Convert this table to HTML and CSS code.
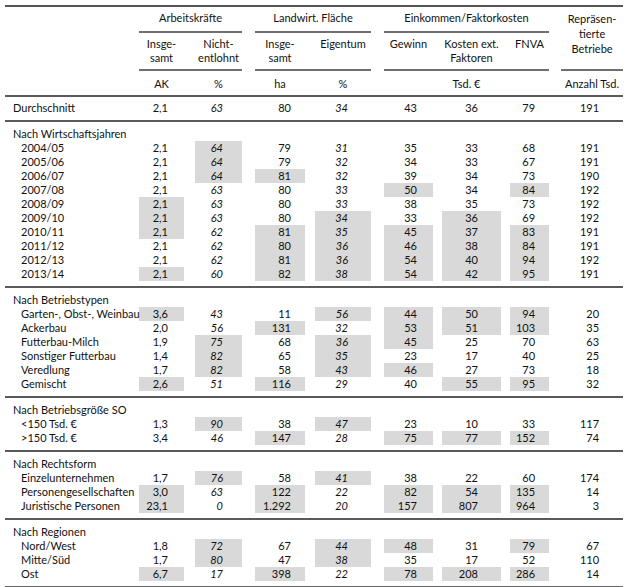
FILE: index.html
```html
<!DOCTYPE html>
<html lang="de">
<head>
<meta charset="utf-8">
<title>Betriebe</title>
<link rel="stylesheet" href="styles.css">
</head>
<body>
<table class="t">
  <colgroup>
    <col class="w-lbl"><col class="w-ak"><col class="w-g11"><col class="w-ne"><col class="w-g13"><col class="w-lf"><col class="w-g10"><col class="w-eig"><col class="w-g13"><col class="w-gew"><col class="w-g9"><col class="w-kos"><col class="w-g9"><col class="w-fnva"><col class="w-g12"><col class="w-anz">
  </colgroup>
  <thead>
    <tr class="h1">
      <th></th>
      <th colspan="3" class="ln">Arbeitskräfte</th>
      <th></th>
      <th colspan="3" class="ln">Landwirt. Fläche</th>
      <th></th>
      <th colspan="5" class="ln">Einkommen/Faktorkosten</th>
      <th></th>
      <th rowspan="2" class="ln rep">Repräsen-<br>tierte<br>Betriebe</th>
    </tr>
    <tr class="h2">
      <th></th>
      <th class="ln">Insge-<br>samt</th><th class="ln"></th><th class="ln">Nicht-<br>entlohnt</th>
      <th></th>
      <th class="ln">Insge-<br>samt</th><th class="ln"></th><th class="ln">Eigentum</th>
      <th></th>
      <th class="ln">Gewinn</th><th class="ln"></th><th class="ln">Kosten ext.<br>Faktoren</th><th class="ln"></th><th class="ln">FNVA</th>
      <th></th>
    </tr>
    <tr class="h3">
      <th></th>
      <th>AK</th><th></th><th>%</th><th></th><th>ha</th><th></th><th>%</th><th></th>
      <th colspan="5">Tsd. €</th><th></th><th>Anzahl Tsd.</th>
    </tr>
  </thead>
  <tbody class="avg">
    <tr class="r"><td class="top">Durchschnitt</td><td>2,1</td><td></td><td>63</td><td></td><td>80</td><td></td><td>34</td><td></td><td>43</td><td></td><td>36</td><td></td><td>79</td><td></td><td>191</td></tr>
  </tbody>
  <tbody class="sec">
    <tr class="hd"><th colspan="16">Nach Wirtschaftsjahren</th></tr>
    <tr class="r"><td>2004/05</td><td>2,1</td><td></td><td class="s">64</td><td></td><td>79</td><td></td><td>31</td><td></td><td>35</td><td></td><td>33</td><td></td><td>68</td><td></td><td>191</td></tr>
    <tr class="r"><td>2005/06</td><td>2,1</td><td></td><td class="s">64</td><td></td><td>79</td><td></td><td>32</td><td></td><td>34</td><td></td><td>33</td><td></td><td>67</td><td></td><td>191</td></tr>
    <tr class="r"><td>2006/07</td><td>2,1</td><td></td><td class="s">64</td><td></td><td class="s">81</td><td></td><td>32</td><td></td><td>39</td><td></td><td>34</td><td></td><td>73</td><td></td><td>190</td></tr>
    <tr class="r"><td>2007/08</td><td>2,1</td><td></td><td>63</td><td></td><td>80</td><td></td><td>33</td><td></td><td class="s">50</td><td></td><td>34</td><td></td><td class="s">84</td><td></td><td>192</td></tr>
    <tr class="r"><td>2008/09</td><td class="s">2,1</td><td></td><td>63</td><td></td><td>80</td><td></td><td>33</td><td></td><td>38</td><td></td><td>35</td><td></td><td>73</td><td></td><td>192</td></tr>
    <tr class="r"><td>2009/10</td><td class="s">2,1</td><td></td><td>63</td><td></td><td>80</td><td></td><td class="s">34</td><td></td><td>33</td><td></td><td class="s">36</td><td></td><td>69</td><td></td><td>192</td></tr>
    <tr class="r"><td>2010/11</td><td class="s">2,1</td><td></td><td>62</td><td></td><td class="s">81</td><td></td><td class="s">35</td><td></td><td class="s">45</td><td></td><td class="s">37</td><td></td><td class="s">83</td><td></td><td>191</td></tr>
    <tr class="r"><td>2011/12</td><td>2,1</td><td></td><td>62</td><td></td><td class="s">80</td><td></td><td class="s">36</td><td></td><td class="s">46</td><td></td><td class="s">38</td><td></td><td class="s">84</td><td></td><td>191</td></tr>
    <tr class="r"><td>2012/13</td><td>2,1</td><td></td><td>62</td><td></td><td class="s">81</td><td></td><td class="s">36</td><td></td><td class="s">54</td><td></td><td class="s">40</td><td></td><td class="s">94</td><td></td><td>192</td></tr>
    <tr class="r"><td>2013/14</td><td class="s">2,1</td><td></td><td>60</td><td></td><td class="s">82</td><td></td><td class="s">38</td><td></td><td class="s">54</td><td></td><td class="s">42</td><td></td><td class="s">95</td><td></td><td>191</td></tr>
    <tr class="pad"><td colspan="16"></td></tr>
  </tbody>
  <tbody class="sec">
    <tr class="hd"><th colspan="16">Nach Betriebstypen</th></tr>
    <tr class="r"><td>Garten-, Obst-, Weinbau</td><td class="s">3,6</td><td></td><td>43</td><td></td><td>11</td><td></td><td class="s">56</td><td></td><td class="s">44</td><td></td><td class="s">50</td><td></td><td class="s">94</td><td></td><td>20</td></tr>
    <tr class="r"><td>Ackerbau</td><td>2,0</td><td></td><td>56</td><td></td><td class="s">131</td><td></td><td>32</td><td></td><td class="s">53</td><td></td><td class="s">51</td><td></td><td class="s">103</td><td></td><td>35</td></tr>
    <tr class="r"><td>Futterbau-Milch</td><td>1,9</td><td></td><td class="s">75</td><td></td><td>68</td><td></td><td class="s">36</td><td></td><td class="s">45</td><td></td><td>25</td><td></td><td>70</td><td></td><td>63</td></tr>
    <tr class="r"><td>Sonstiger Futterbau</td><td>1,4</td><td></td><td class="s">82</td><td></td><td>65</td><td></td><td class="s">35</td><td></td><td>23</td><td></td><td>17</td><td></td><td>40</td><td></td><td>25</td></tr>
    <tr class="r"><td>Veredlung</td><td>1,7</td><td></td><td class="s">82</td><td></td><td>58</td><td></td><td class="s">43</td><td></td><td class="s">46</td><td></td><td>27</td><td></td><td>73</td><td></td><td>18</td></tr>
    <tr class="r"><td>Gemischt</td><td class="s">2,6</td><td></td><td>51</td><td></td><td class="s">116</td><td></td><td>29</td><td></td><td>40</td><td></td><td class="s">55</td><td></td><td class="s">95</td><td></td><td>32</td></tr>
    <tr class="pad"><td colspan="16"></td></tr>
  </tbody>
  <tbody class="sec">
    <tr class="hd"><th colspan="16">Nach Betriebsgröße SO</th></tr>
    <tr class="r"><td>&lt;150 Tsd. €</td><td>1,3</td><td></td><td class="s">90</td><td></td><td>38</td><td></td><td class="s">47</td><td></td><td>23</td><td></td><td>10</td><td></td><td>33</td><td></td><td>117</td></tr>
    <tr class="r"><td>&gt;150 Tsd. €</td><td>3,4</td><td></td><td>46</td><td></td><td class="s">147</td><td></td><td>28</td><td></td><td class="s">75</td><td></td><td class="s">77</td><td></td><td class="s">152</td><td></td><td>74</td></tr>
    <tr class="pad"><td colspan="16"></td></tr>
  </tbody>
  <tbody class="sec">
    <tr class="hd"><th colspan="16">Nach Rechtsform</th></tr>
    <tr class="r"><td>Einzelunternehmen</td><td>1,7</td><td></td><td class="s">76</td><td></td><td>58</td><td></td><td class="s">41</td><td></td><td>38</td><td></td><td>22</td><td></td><td>60</td><td></td><td>174</td></tr>
    <tr class="r"><td>Personengesellschaften</td><td class="s">3,0</td><td></td><td>63</td><td></td><td class="s">122</td><td></td><td>22</td><td></td><td class="s">82</td><td></td><td class="s">54</td><td></td><td class="s">135</td><td></td><td>14</td></tr>
    <tr class="r"><td>Juristische Personen</td><td class="s">23,1</td><td></td><td>0</td><td></td><td class="s">1.292</td><td></td><td>20</td><td></td><td class="s">157</td><td></td><td class="s">807</td><td></td><td class="s">964</td><td></td><td>3</td></tr>
    <tr class="pad"><td colspan="16"></td></tr>
  </tbody>
  <tbody class="sec">
    <tr class="hd"><th colspan="16">Nach Regionen</th></tr>
    <tr class="r"><td>Nord/West</td><td>1,8</td><td></td><td class="s">72</td><td></td><td>67</td><td></td><td class="s">44</td><td></td><td class="s">48</td><td></td><td>31</td><td></td><td class="s">79</td><td></td><td>67</td></tr>
    <tr class="r"><td>Mitte/Süd</td><td>1,7</td><td></td><td class="s">80</td><td></td><td>47</td><td></td><td class="s">38</td><td></td><td>35</td><td></td><td>17</td><td></td><td>52</td><td></td><td>110</td></tr>
    <tr class="r"><td>Ost</td><td class="s">6,7</td><td></td><td>17</td><td></td><td class="s">398</td><td></td><td>22</td><td></td><td class="s">78</td><td></td><td class="s">208</td><td></td><td class="s">286</td><td></td><td>14</td></tr>
    <tr class="pad"><td colspan="16"></td></tr>
  </tbody>
</table>
</body>
</html>
```
FILE: styles.css
```css
html, body {
  margin: 0;
  padding: 0;
  background: #ffffff;
}

body {
  font-family: Lato, "Open Sans", "Liberation Sans", sans-serif;
  font-size: 11px;
  color: #111111;
}

.t {
  margin: 5px 0 0 5px;
  width: 618px;
  table-layout: fixed;
  border-collapse: separate;
  border-spacing: 0;
  border-top: 2px solid #555555;
  border-bottom: 2px solid #666666;
}

.w-lbl { width: 134px; }
.w-ak { width: 45px; }
.w-ne { width: 47px; }
.w-lf { width: 50px; }
.w-eig { width: 56px; }
.w-gew { width: 49px; }
.w-kos { width: 59px; }
.w-fnva { width: 39px; }
.w-anz { width: 62px; }
.w-g9 { width: 9px; }
.w-g10 { width: 10px; }
.w-g11 { width: 11px; }
.w-g12 { width: 12px; }
.w-g13 { width: 13px; }

.t th,
.t td {
  padding: 0;
  font-weight: normal;
  line-height: 14px;
  white-space: nowrap;
}

/* header */
.t thead th {
  text-align: center;
  vertical-align: top;
}

.h1 th {
  padding: 4px 0 6px;
}

.h2 th {
  padding: 4px 0 4px;
}

.h1 th.rep {
  padding: 4px 0 0;
  line-height: 15px;
}

.t thead th.ln {
  border-bottom: 2px solid #707070;
}

.h3 th {
  padding: 6px 0 4px;
  border-bottom: 2px solid #5a5a5a;
}

/* body rows */
.t tr.r td {
  height: 14px;
  text-align: right;
  vertical-align: middle;
}

.t tr.r td:first-child {
  text-align: left;
  padding-left: 16px;
}

.t tr.r td.top:first-child {
  padding-left: 8px;
}

.avg tr.r td {
  padding-top: 4px;
  padding-bottom: 5px;
}

.t tr.r td:nth-child(2) { padding-right: 16px; }
.t tr.r td:nth-child(4) { padding-right: 19px; font-style: italic; }
.t tr.r td:nth-child(6) { padding-right: 14px; }
.t tr.r td:nth-child(8) { padding-right: 23px; font-style: italic; }
.t tr.r td:nth-child(10) { padding-right: 16px; }
.t tr.r td:nth-child(12) { padding-right: 23px; }
.t tr.r td:nth-child(14) { padding-right: 14px; }
.t tr.r td:nth-child(16) { padding-right: 24px; }

.t td.s {
  background: #d9d9d9;
}

.sec tr.hd th {
  text-align: left;
  padding: 5px 0 0 8px;
  border-top: 2px solid #5a5a5a;
}

.sec tr.pad td {
  height: 5px;
  padding: 0;
  line-height: 0;
}
```
